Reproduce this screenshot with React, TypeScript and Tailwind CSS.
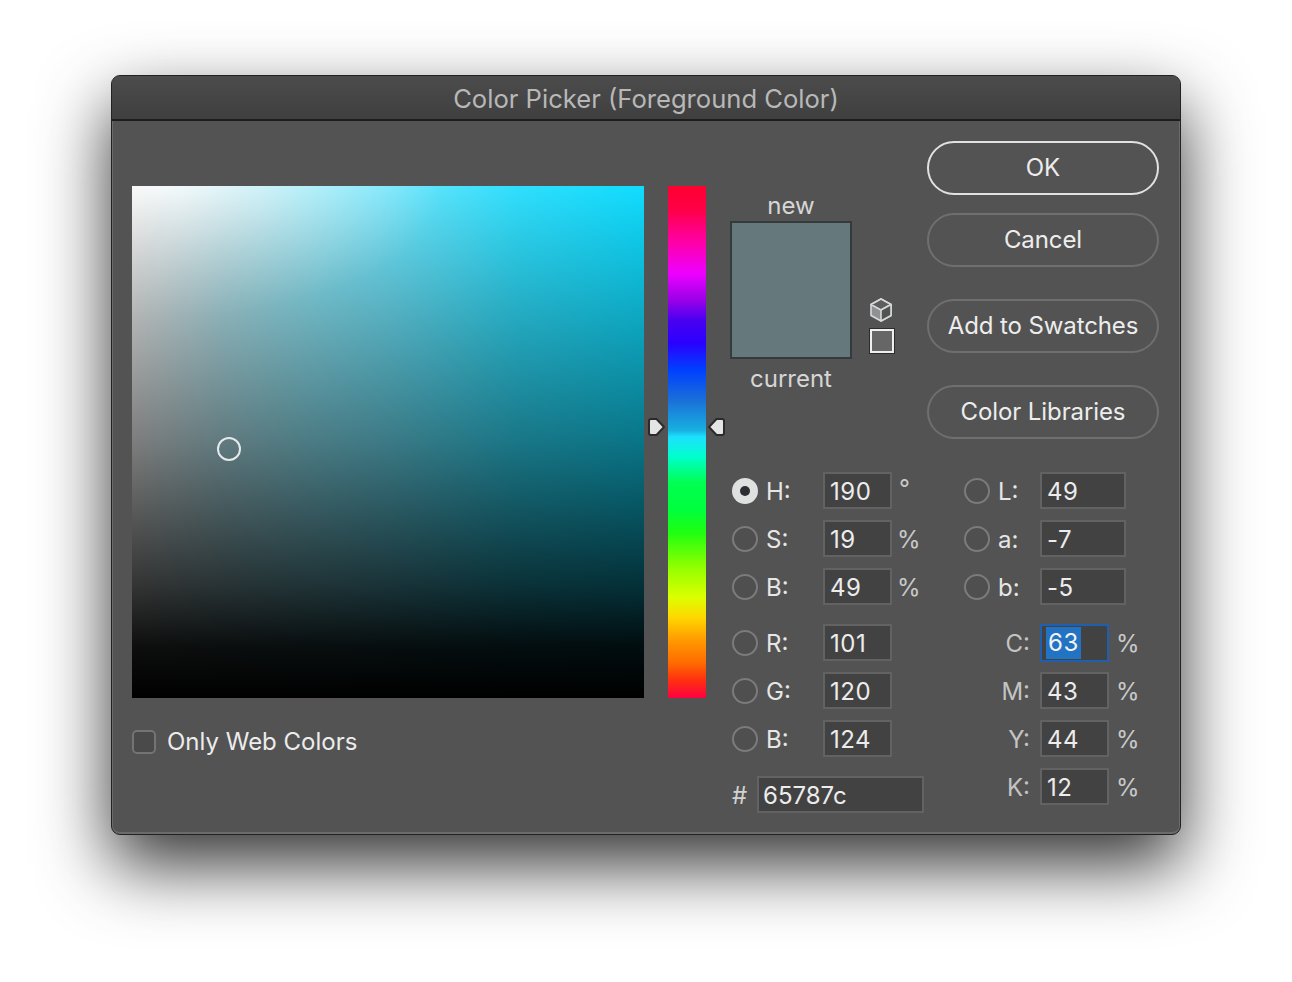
const font = "font-['Inter',sans-serif]";

function Radio({ selected }: { selected?: boolean }) {
  if (selected) {
    return (
      <div className="flex h-[26px] w-[26px] shrink-0 items-center justify-center rounded-full bg-[#dfe1e1]">
        <div className="h-[10px] w-[10px] rounded-full bg-[#2b2f31]" />
      </div>
    );
  }
  return <div className="h-[26px] w-[26px] shrink-0 rounded-full border-2 border-[#7b7b7b] bg-[#4f4f4f]" />;
}

function Box({ value, wide, focus }: { value: string; wide?: boolean; focus?: boolean }) {
  if (focus) {
    return (
      <div className="flex h-[38px] w-[69px] shrink-0 items-center border-2 border-[#1f5fae] bg-[#424242] pl-[4px] tracking-[0.5px] text-[#f2f2f2]">
        <span className="bg-[#2273c4] px-[2px] leading-[32px]">{value}</span>
      </div>
    );
  }
  return (
    <div
      className={`flex h-[37px] shrink-0 items-center border-2 border-[#626262] bg-[#424242] pl-[5px] pt-[2px] tracking-[0.5px] text-[#ececec] ${
        wide ? "w-[86px]" : "w-[69px]"
      }`}
    >
      {value}
    </div>
  );
}

function HsbRow({ label, value, unit, selected }: { label: string; value: string; unit: string; selected?: boolean }) {
  return (
    <div className="flex h-[37px] items-center pl-[2px]">
      <Radio selected={selected} />
      <span className="ml-[8px] w-[57px] pt-[2px] text-[#e6e6e6]">{label}</span>
      <Box value={value} />
      <span className={`pt-[2px] text-[#c9c9c9] ${unit === "°" ? "-mt-[5px] ml-[7px]" : "ml-[5px]"}`}>{unit}</span>
    </div>
  );
}

function LabRow({ label, value }: { label: string; value: string }) {
  return (
    <div className="flex h-[37px] items-center">
      <Radio />
      <span className="ml-[8px] w-[42px] pt-[2px] text-[#e6e6e6]">{label}</span>
      <Box value={value} wide />
    </div>
  );
}

function CmykRow({ label, value, focus }: { label: string; value: string; focus?: boolean }) {
  return (
    <div className="flex h-[37px] items-center">
      <span className="w-[76px] pr-[10px] pt-[2px] text-right text-[#c4c4c4]">{label}</span>
      <Box value={value} focus={focus} />
      <span className="ml-[7px] pt-[2px] text-[#c9c9c9]">%</span>
    </div>
  );
}

function DialogButton({ children, primary }: { children: React.ReactNode; primary?: boolean }) {
  return (
    <div
      className={`flex h-[54px] w-[232px] items-center justify-center rounded-full border-2 tracking-[-0.1px] text-[#ededed] ${
        primary ? "border-[#e2e2e2]" : "border-[#6f6f6f]"
      }`}
    >
      {children}
    </div>
  );
}

export default function App() {
  return (
    <div className={`h-[982px] w-[1292px] overflow-hidden bg-white pl-[111px] pt-[75px] text-[24px] ${font}`}>
      <div className="h-[760px] w-[1070px] overflow-hidden rounded-[9px] border border-[#222222] bg-[#535353] shadow-[0_30px_70px_rgba(0,0,0,0.8),inset_1px_0_0_#6b6b6b,inset_-1px_0_0_#6b6b6b,inset_0_-2px_0_#6b6b6b]">
        <div className="flex h-[45px] items-center justify-center border-b-2 border-[#1d1d1d] bg-[linear-gradient(to_bottom,#4c4c4c,#3f3f3f)] pt-[3px] text-[25.6px] text-[#b8b8b8]">
          Color Picker (Foreground Color)
        </div>

        <div className="flex pl-[20px]">
          <div className="w-[512px] pt-[65px]">
            <div className="relative h-[512px] bg-[linear-gradient(to_bottom,rgba(0,0,0,0),rgba(0,0,0,0.47)_50%,rgba(0,0,0,0.78)_78%,rgba(0,0,0,0.94)_90%,#000),radial-gradient(ellipse_55%_26%_at_6%_0,rgba(255,255,255,0.75),rgba(255,255,255,0.35)_50%,rgba(255,255,255,0)),linear-gradient(to_right,#ececec,#b4e6ef_18%,#8ee8f8_35%,#70e5fb_50%,#30dffd_75%,#10dcff)]">
              <div className="absolute left-[85px] top-[251px] h-[24px] w-[24px] rounded-full border-2 border-[#e8e8e8]" />
            </div>
            <div className="mt-[26px] flex items-center">
              <div className="h-[24px] w-[24px] rounded-[5px] border-2 border-[#747474] bg-[#4a4a4a]" />
              <span className="ml-[11px] text-[#ececec]">Only Web Colors</span>
            </div>
          </div>

          <div className="ml-[24px] pt-[65px]">
            <div className="relative h-[512px] w-[38px] bg-[linear-gradient(to_bottom,#ff0030,#ff0048_4.7%,#ff00a0_10.5%,#ee00ff_17%,#9a00e8_22.3%,#4a00f0_26.2%,#2a00ff_30.7%,#0040ff_35.9%,#1a6fd8_41.8%,#18b0e0_47.7%,#1de0ff_49%,#00ffcc_52.9%,#00ff50_58%,#00ff3c_63.3%,#20ff10_67.8%,#90ff00_74.4%,#dcff00_80.3%,#ffd800_84.2%,#ff9a00_88.7%,#ff6a00_93.2%,#ff3010_96.5%,#ff0040)]">
              <svg className="absolute -left-[21px] top-[231px]" width="19" height="20" viewBox="0 0 19 20">
                <path d="M2 4a2 2 0 0 1 2-2h5.500l7.500 8-7.500 8H4a2 2 0 0 1-2-2z" fill="#e4e6e6" stroke="#2b2b2b" strokeWidth="2" strokeLinejoin="round" />
              </svg>
              <svg className="absolute -right-[20px] top-[231px]" width="19" height="20" viewBox="0 0 19 20">
                <path d="M17 4a2 2 0 0 0-2-2H9.500L2 10l7.500 8H15a2 2 0 0 0 2-2z" fill="#e4e6e6" stroke="#2b2b2b" strokeWidth="2" strokeLinejoin="round" />
              </svg>
            </div>
          </div>

          <div className="ml-[24px] pt-[20px]">
            <div className="flex h-[298px]">
              <div className="flex w-[122px] flex-col items-center">
                <div className="mt-[49px] h-[31px] leading-[32px] text-[#d6d6d6]">new</div>
                <div className="h-[138px] w-[122px] border-2 border-[#353b3d] bg-[#65787c]" />
                <div className="mt-[4px] leading-[32px] text-[#d6d6d6]">current</div>
              </div>
              <div className="ml-[18px] w-[57px] pt-[156px]">
                <svg width="24" height="26" viewBox="0 0 24 26" className="-ml-[1px] mb-[6px]">
                  <path d="M12 2l10 5.500v11L12 24 2 18.500v-11z" fill="#8f9292" stroke="#d8dada" strokeWidth="1.600" strokeLinejoin="round" />
                  <path d="M12 2l10 5.500L12 13 2 7.500z" fill="#5d5f5f" stroke="#d8dada" strokeWidth="1.600" strokeLinejoin="round" />
                  <path d="M12 13l10-5.500v11L12 24z" fill="#535353" stroke="#d8dada" strokeWidth="1.600" strokeLinejoin="round" />
                </svg>
                <div className="h-[24px] w-[24px] border-2 border-[#efefef] bg-[#666] outline outline-1 outline-[#2c2c2c]" />
              </div>
              <div className="flex flex-col">
                <DialogButton primary>OK</DialogButton>
                <div className="mt-[18px]"><DialogButton>Cancel</DialogButton></div>
                <div className="mt-[32px]"><DialogButton>Add to Swatches</DialogButton></div>
                <div className="mt-[32px]"><DialogButton>Color Libraries</DialogButton></div>
              </div>
            </div>

            <div className="mt-[33px] flex">
              <div className="w-[234px]">
                <div className="flex flex-col gap-[11px]">
                  <HsbRow label="H:" value="190" unit="°" selected />
                  <HsbRow label="S:" value="19" unit="%" />
                  <HsbRow label="B:" value="49" unit="%" />
                </div>
                <div className="mt-[19px] flex flex-col gap-[11px]">
                  <HsbRow label="R:" value="101" unit="" />
                  <HsbRow label="G:" value="120" unit="" />
                  <HsbRow label="B:" value="124" unit="" />
                </div>
                <div className="mt-[19px] flex h-[37px] items-center pl-[2px]">
                  <span className="w-[25px] pt-[2px] text-[#d2d2d2]">#</span>
                  <div className="flex h-[37px] w-[167px] items-center border-2 border-[#626262] bg-[#424242] pl-[4px] pt-[2px] text-[#ececec]">
                    65787c
                  </div>
                </div>
              </div>
              <div>
                <div className="flex flex-col gap-[11px]">
                  <LabRow label="L:" value="49" />
                  <LabRow label="a:" value="-7" />
                  <LabRow label="b:" value="-5" />
                </div>
                <div className="mt-[19px] flex flex-col gap-[11px]">
                  <CmykRow label="C:" value="63" focus />
                  <CmykRow label="M:" value="43" />
                  <CmykRow label="Y:" value="44" />
                  <CmykRow label="K:" value="12" />
                </div>
              </div>
            </div>
          </div>
        </div>
      </div>
    </div>
  );
}
